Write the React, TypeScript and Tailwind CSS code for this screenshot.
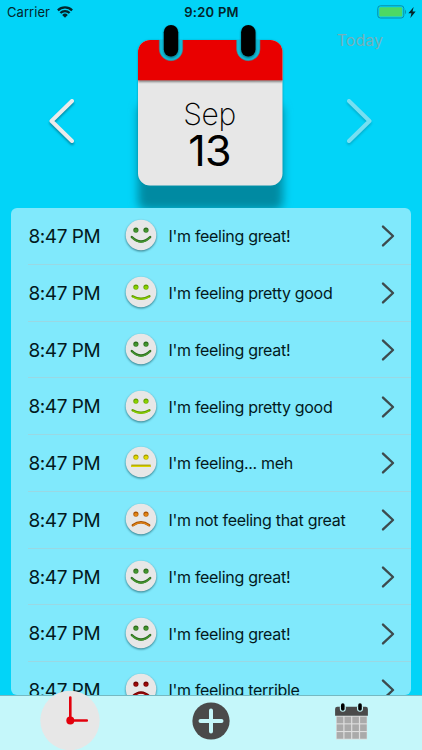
import { useState } from 'react';

type Mood = 'great' | 'good' | 'meh' | 'bad' | 'terrible';

const MOODS: Record<Mood, { label: string; top: string; color: string; mouth: string }> = {
  great: {
    label: "I'm feeling great!",
    top: '#2c6b1c',
    color: '#43952f',
    mouth: 'M-9.2 2Q0 11 9.2 2',
  },
  good: {
    label: "I'm feeling pretty good",
    top: '#5f9c00',
    color: '#8bd000',
    mouth: 'M-8.4 4.2Q0 9.2 8.4 4.2',
  },
  meh: { label: "I'm feeling... meh", top: '#a39a00', color: '#e0d800', mouth: 'M-9.7 3.8H9.7' },
  bad: {
    label: "I'm not feeling that great",
    top: '#a85100',
    color: '#e08416',
    mouth: 'M-8.2 6.2Q0 .2 8.2 6.2',
  },
  terrible: {
    label: "I'm feeling terrible",
    top: '#6d0000',
    color: '#9c0808',
    mouth: 'M-8.6 7.6Q0 -.8 8.6 7.6',
  },
};

const ENTRIES: { time: string; mood: Mood }[] = [
  { time: '8:47 PM', mood: 'great' },
  { time: '8:47 PM', mood: 'good' },
  { time: '8:47 PM', mood: 'great' },
  { time: '8:47 PM', mood: 'good' },
  { time: '8:47 PM', mood: 'meh' },
  { time: '8:47 PM', mood: 'bad' },
  { time: '8:47 PM', mood: 'great' },
  { time: '8:47 PM', mood: 'great' },
  { time: '8:47 PM', mood: 'terrible' },
];

/* ------------------------------------------------------------- */
/* Icons                                                         */
/* ------------------------------------------------------------- */
function Face({ mood }: { mood: Mood }) {
  const { top, color, mouth } = MOODS[mood];
  return (
    <svg
      viewBox="-17 -17 34 34"
      className="h-[34px] w-[34px] drop-shadow-[0_1px_1px_rgba(0,60,70,0.65)]"
    >
      <circle r="15.3" fill="#e7e7e7" />
      {/* darker upper edge gives the cut-out look */}
      <g fill={top}>
        <circle cx="-5.1" cy="-5" r="2.6" />
        <circle cx="5" cy="-5" r="2.6" />
      </g>
      <g fill={color}>
        <circle cx="-5" cy="-4.4" r="1.9" />
        <circle cx="5.1" cy="-4.4" r="1.9" />
      </g>
      <path
        d={mouth}
        fill="none"
        stroke={top}
        strokeWidth="2.4"
        strokeLinecap={mood === 'meh' ? 'butt' : 'round'}
      />
      <path d={mouth} fill="none" stroke={color} strokeWidth="1.3" transform="translate(0 .5)" />
    </svg>
  );
}

function CalendarPage({ month, day }: { month: string; day: string }) {
  return (
    <div className="relative h-[165px] w-[145px]">
      <svg viewBox="0 0 145 165" className="absolute inset-0 h-full w-full overflow-visible">
        <defs>
          <filter id="soft" x="-20%" y="-20%" width="140%" height="140%">
            <feGaussianBlur stdDeviation="5" />
          </filter>
          <filter id="edge" x="-10%" y="-50%" width="120%" height="200%">
            <feGaussianBlur stdDeviation="1" />
          </filter>
          <clipPath id="page">
            <rect y="16" width="144.5" height="145.5" rx="12" />
          </clipPath>
        </defs>
        <rect x="0" y="80" width="145" height="106" rx="8" fill="#008aa2" filter="url(#soft)" />
        <rect y="16.4" width="144.5" height="145.8" rx="12" fill="#0794ab" filter="url(#edge)" />
        <g clipPath="url(#page)">
          <rect y="16" width="145" height="146" fill="#e7e7e7" />
          <rect y="55" width="145" height="3" fill="#333" opacity=".55" filter="url(#edge)" />
          <rect y="16" width="145" height="40.3" fill="#e90000" />
        </g>
        {[33, 110.3].map((x) => (
          <g key={x}>
            <path
              d={`M${x - 11.7} 15.5V25a11.7 11.7 0 0 0 23.4 0V15.5Z`}
              fill="#10bcd8"
              stroke="#4b7d86"
              strokeWidth=".6"
            />
            <path d={`M${x - 12.2} 12h24.4v3.8h-24.4Z`} fill="#02d4f8" />
            <rect x={x - 7.3} y="2" width="14.6" height="32" rx="7.3" fill="#006f80" filter="url(#edge)" />
            <rect x={x - 7.2} y="1" width="14.4" height="31.5" rx="7.2" fill="#000" />
          </g>
        ))}
      </svg>
      <div className="relative flex flex-col items-center pt-[72px] pr-[2px] text-black">
        <span className="text-[30px] leading-[36px] font-extralight tracking-[-0.4px]">{month}</span>
        <span className="text-[43px] leading-[36px] tracking-[-0.8px]">{day}</span>
      </div>
    </div>
  );
}

function BigChevron({ flip = false }: { flip?: boolean }) {
  return (
    <svg
      viewBox="0 0 28 50"
      className="h-[50px] w-[28px] overflow-visible drop-shadow-[0_2px_1px_rgba(0,80,100,0.55)]"
      opacity={flip ? 0.5 : 1}
    >
      <path
        d={flip ? 'M4 5L24.5 25L4 45' : 'M24 5L3.5 25L24 45'}
        fill="none"
        stroke="#ebebeb"
        strokeWidth="4"
        strokeLinecap="round"
        strokeLinejoin="round"
      />
    </svg>
  );
}

function TabCalendar() {
  const cells = [0, 1, 2, 3];
  return (
    <svg viewBox="0 0 34 38" className="h-[38px] w-[34px] -translate-x-[0.5px] -translate-y-[1.5px]">
      <rect x="1.6" y="13" width="31" height="24" fill="#dedede" />
      {[0, 1, 2].map((r) =>
        cells.map((c) => (
          <rect
            key={`${r}-${c}`}
            x={2.2 + c * 7.8}
            y={14.2 + r * 7.7}
            width="6.6"
            height="6.6"
            fill="#aaa"
          />
        )),
      )}
      <path d="M.6 13.2V6.5Q.6 4.3 2.8 4.3H31.2Q33.4 4.3 33.4 6.5V13.2Z" fill="#4a4a4a" />
      {[8.3, 25.5].map((x) => (
        <g key={x}>
          <path d={`M${x - 3} 4V6.2a3 3 0 0 0 6 0V4Z`} fill="#c5f7fa" />
          <rect x={x - 1.8} y=".8" width="3.6" height="7.4" rx="1.8" fill="#000" />
        </g>
      ))}
    </svg>
  );
}

/* ------------------------------------------------------------- */
/* Sections                                                      */
/* ------------------------------------------------------------- */
function StatusBar() {
  return (
    <div className="grid h-6 grid-cols-3 items-center pr-[6px] pl-[7px] text-[13px] leading-6 text-[#04252b]">
      <div className="flex items-center gap-[7px]">
        <span className="tracking-[0.05px]">Carrier</span>
        <svg viewBox="0 0 16 12" className="h-3 w-4">
          <g fill="none" stroke="#04252b" strokeWidth="2.3">
            <path d="M.9 4.4a10 10 0 0 1 14.2 0" />
            <path d="M3.4 7a6.5 6.5 0 0 1 9.2 0" />
          </g>
          <path d="M8 11.7L5.2 8.9a4 4 0 0 1 5.6 0Z" fill="#04252b" />
        </svg>
      </div>
      <span className="text-center font-semibold tracking-[0.25px] whitespace-nowrap">9:20 PM</span>
      <div className="flex items-center justify-end gap-[1px]">
        <svg viewBox="0 0 30 14" className="h-[14px] w-[30px]">
          <rect x=".8" y=".8" width="26" height="12.2" rx="2.6" fill="none" stroke="#0a8ea6" />
          <rect x="2.3" y="2.2" width="23" height="9.4" rx="1.2" fill="#4cd964" />
          <path d="M28.1 4.6q2 2.3 0 4.6Z" fill="#0a8ea6" />
        </svg>
        <svg viewBox="0 0 7 10" className="h-[11px] w-[8px]">
          <path d="M5 0L.2 5.7H3L2 10L6.8 4.1H4Z" fill="#04252b" />
        </svg>
      </div>
    </div>
  );
}

function EntryRow({ time, mood }: { time: string; mood: Mood }) {
  return (
    <li className="flex h-[56.75px] shrink-0 flex-col pl-[17px]">
      <div className="flex flex-1 items-center pt-px pr-[16px]">
        <span className="w-[96px] pt-[2px] pl-[0.5px] text-[19px] tracking-[-0.45px] whitespace-nowrap">
          {time}
        </span>
        <span className="-mt-[2px] -ml-[0.5px] shrink-0">
          <Face mood={mood} />
        </span>
        <span className="ml-[11px] flex-1 text-[16px] tracking-[-0.3px] whitespace-nowrap">
          {MOODS[mood].label}
        </span>
        <svg viewBox="0 0 14 24" className="h-6 w-[14px]">
          <path
            d="M2 2.6L12 12L2 21.4"
            fill="none"
            stroke="#3d4b4e"
            strokeWidth="2.4"
            strokeLinecap="round"
            strokeLinejoin="round"
          />
        </svg>
      </div>
      <div className="h-px bg-[#9ad8e3]" />
    </li>
  );
}

export default function App() {
  const [tab, setTab] = useState('today');

  return (
    <div className="flex h-[750px] w-[422px] flex-col overflow-hidden bg-[#02d4f8] font-['Inter','Liberation_Sans',sans-serif] text-[#03191d]">
      <StatusBar />

      {/* date picker */}
      <header className="relative flex h-[184px] shrink-0 items-start justify-between pr-[49px] pl-[48px]">
        <button className="mt-[72px]" aria-label="previous day">
          <BigChevron />
        </button>
        <CalendarPage month="Sep" day="13" />
        <button className="mt-[72px]" aria-label="next day">
          <BigChevron flip />
        </button>
        <span className="absolute top-[4px] right-[39px] text-[16px] leading-[24px] text-[#74b0b9]">
          Today
        </span>
      </header>

      {/* entries */}
      <ul className="relative mr-[11.5px] ml-[11px] flex h-[487px] shrink-0 flex-col overflow-hidden rounded-[6px] bg-[#80e9fc]">
        {ENTRIES.map((entry, i) => (
          <EntryRow key={i} {...entry} />
        ))}
      </ul>

      {/* tabs */}
      <nav className="relative grid h-[55px] shrink-0 grid-cols-3 items-center border-t border-[#75b9c2] bg-[#c5f7fa]">
        <button className="flex justify-center" onClick={() => setTab('today')} aria-pressed={tab === 'today'}>
          <svg viewBox="-30 -30 60 60" className="-my-1 h-[60px] w-[60px] -translate-y-[2.5px]">
            <circle r="29.7" fill="#e7e7e7" />
            <path d="M.3 -23V0H16.8" fill="none" stroke="#e3000c" strokeWidth="2.6" strokeLinecap="round" />
            <circle cx=".3" r="4" fill="#e3000c" />
          </svg>
        </button>
        <button className="flex justify-center" onClick={() => setTab('add')}>
          <svg viewBox="-19 -19 38 38" className="h-[38px] w-[38px] -translate-y-[2px]">
            <circle r="18.6" fill="#4a4a4a" />
            <path d="M-10.5 0H10.5M0 -10.5V10.5" stroke="#c5f7fa" strokeWidth="4" strokeLinecap="round" />
          </svg>
        </button>
        <button className="flex justify-center" onClick={() => setTab('calendar')}>
          <TabCalendar />
        </button>
      </nav>
    </div>
  );
}
